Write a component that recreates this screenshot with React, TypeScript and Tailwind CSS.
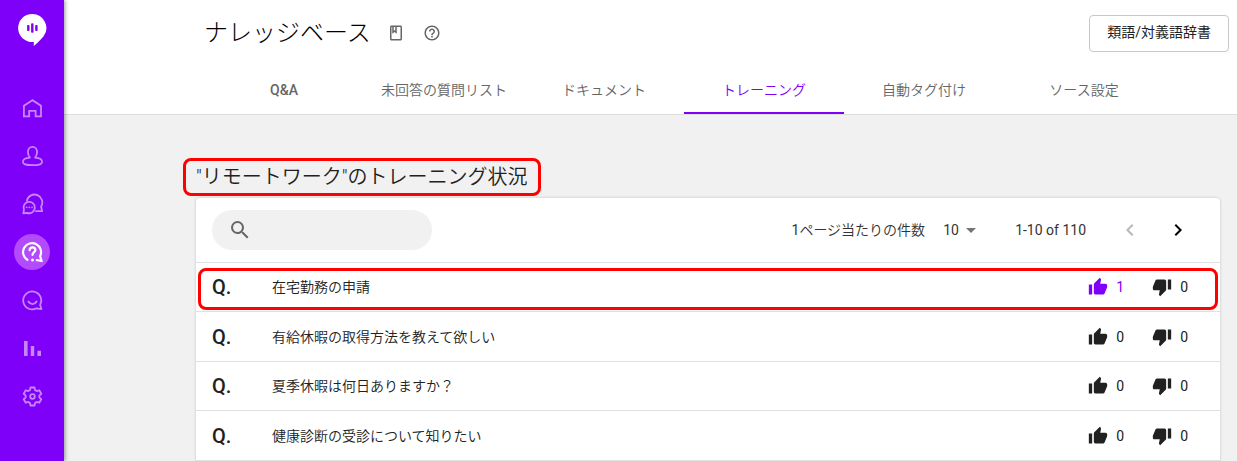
import { useState, type ReactNode } from "react";
import {
  MdArrowDropDown,
  MdChevronLeft,
  MdChevronRight,
  MdHelpOutline,
  MdOutlineClass,
  MdSearch,
  MdThumbDown,
  MdThumbUp,
} from "react-icons/md";

type Question = {
  text: string;
  good: number;
  bad: number;
  highlighted?: boolean;
};

const tabs = [
  "Q&A",
  "未回答の質問リスト",
  "ドキュメント",
  "トレーニング",
  "自動タグ付け",
  "ソース設定",
];

const questions: Question[] = [
  { text: "在宅勤務の申請", good: 1, bad: 0, highlighted: true },
  { text: "有給休暇の取得方法を教えて欲しい", good: 0, bad: 0 },
  { text: "夏季休暇は何日ありますか？", good: 0, bad: 0 },
  { text: "健康診断の受診について知りたい", good: 0, bad: 0 },
];

function NavIcon({ children, bold = false }: { children: ReactNode; bold?: boolean }) {
  return (
    <svg
      viewBox="0 0 24 24"
      className="size-6"
      fill="none"
      stroke="currentColor"
      strokeWidth={bold ? 2.2 : 1.8}
      strokeLinecap="round"
      strokeLinejoin="round"
      aria-hidden="true"
    >
      {children}
    </svg>
  );
}

const navItems: { label: string; active?: boolean; icon: ReactNode }[] = [
  {
    label: "ホーム",
    icon: (
      <NavIcon>
        <path
          d="M12.4 4.200 3.900 9.800v10.600h5.300v-5.600h6.400v5.600H21V9.800z"
          strokeLinejoin="miter"
        />
      </NavIcon>
    ),
  },
  {
    label: "ユーザー",
    icon: (
      <NavIcon>
        <path d="M9.900 13.600C8.600 12.200 7.900 10.100 7.900 8.100c0-3 1.900-5.200 4.600-5.200s4.600 2.200 4.600 5.200c0 2-.7 4.100-2 5.500 3.900.3 7 2 7 4.300 0 2.200-3.900 3.300-9.600 3.300s-9.600-1.100-9.600-3.300c0-2.300 3.100-4 7-4.300z" />
      </NavIcon>
    ),
  },
  {
    label: "チャット",
    icon: (
      <NavIcon>
        <path d="M6.900 8.600a7.800 7.800 0 1 1 14.200 5.900l1 4.700H16" />
        <path d="M4 17.900A5.700 5.700 0 1 1 7 20.800l-3.700.5z" />
        <path d="M6.600 15.300h.01M9.300 15.300h.01M12 15.300h.01" />
      </NavIcon>
    ),
  },
  {
    label: "ナレッジベース",
    active: true,
    icon: (
      <NavIcon bold>
        <path d="M7.300 19.800a9 9 0 1 1 12.800-3.600L21.700 21l-4.900-.8" />
        <path d="M9.600 10.200c.1-1.800 1.300-2.800 2.900-2.800s2.900 1 2.900 2.600c0 2.100-2.900 2.300-2.900 4.900" />
        <circle cx="12.500" cy="20" r="1.500" fill="currentColor" stroke="none" />
      </NavIcon>
    ),
  },
  {
    label: "満足度",
    icon: (
      <NavIcon>
        <path d="M20.100 16.700A9 9 0 1 0 16.500 20.300l5 .9z" />
        <path d="M8.400 13.500c1 1.700 2.400 2.600 4.100 2.600s3.100-.9 4.100-2.600" />
      </NavIcon>
    ),
  },
  {
    label: "分析",
    icon: (
      <NavIcon>
        <path
          d="M4 5h3.600v15H4zM10.800 10h3.400v10h-3.400zM17.400 14.800H21V20h-3.600z"
          fill="currentColor"
          stroke="none"
        />
      </NavIcon>
    ),
  },
  {
    label: "設定",
    icon: (
      <NavIcon>
        <path
          transform="translate(12.500 12.500)"
          d="M-2.600-6.400-2-9H2l.6 2.600 1.640.95 2.550-.78 2 3.460-1.950 1.820v1.900l1.950 1.820-2 3.460-2.550-.78L2.600 6.400 2 9h-4l-.6-2.600-1.640-.95-2.550.78-2-3.460L-6.840.95v-1.900l-1.950-1.820 2-3.460 2.550.78z"
        />
        <circle cx="12.500" cy="12.500" r="2.300" />
      </NavIcon>
    ),
  },
];

function Sidebar() {
  return (
    <aside className="z-10 flex w-16 shrink-0 flex-col items-center bg-[#7f00f9] shadow-[1px_0_4px_rgba(0,0,0,0.4)]">
      <a href="#top" aria-label="トップ" className="flex h-21 pt-3">
        <svg viewBox="0 0 32 36" className="h-9 w-8" aria-hidden="true">
          <path
            d="M16.300 2a14 14 0 0 1 11.300 22.300c-2.800 3.500-6.200 6.700-9.800 9.800v-4.200A14 14 0 1 1 16.300 2z"
            fill="#fff"
          />
          <g fill="#7f00f9">
            <rect x="11.100" y="13" width="2.400" height="6" rx=".8" />
            <rect x="15.100" y="11.200" width="2.400" height="9.600" rx=".8" />
            <rect x="19.200" y="13" width="2.400" height="6" rx=".8" />
          </g>
        </svg>
      </a>
      <nav className="flex flex-col">
        {navItems.map((item) => (
          <a
            key={item.label}
            href="#nav"
            aria-label={item.label}
            className="flex h-12 items-center justify-center"
          >
            <span
              className={
                item.active
                  ? "flex size-9 items-center justify-center rounded-full bg-[#b34bfc] text-white"
                  : "flex size-9 items-center justify-center text-[#c586fc]"
              }
            >
              {item.icon}
            </span>
          </a>
        ))}
      </nav>
    </aside>
  );
}

function Header() {
  const [activeTab, setActiveTab] = useState("トレーニング");

  return (
    <header className="border-b border-[#dedede] bg-white">
      <div className="flex h-[66px] items-center pr-2 pl-35">
        <h1 className="text-2xl font-light text-black">ナレッジベース</h1>
        <button type="button" aria-label="マニュアル" className="ml-4 text-[#666]">
          <MdOutlineClass size={18} />
        </button>
        <button type="button" aria-label="ヘルプ" className="ml-[18px] text-[#666]">
          <MdHelpOutline size={18} />
        </button>
        <button
          type="button"
          className="ml-auto h-[37px] rounded border border-[#c8c8c8] px-[17px] pb-0.5 text-sm text-[#212121]"
        >
          類語/対義語辞書
        </button>
      </div>
      <div role="tablist" className="flex pl-35">
        {tabs.map((tab) => (
          <button
            key={tab}
            type="button"
            role="tab"
            aria-selected={tab === activeTab}
            onClick={() => setActiveTab(tab)}
            className={
              tab === activeTab
                ? "h-12 w-40 border-b-2 border-[#7f00f9] pt-0.5 text-sm text-[#7f00f9]"
                : "h-12 w-40 border-b-2 border-transparent pt-0.5 text-sm text-[#666]"
            }
          >
            <span className={tab === "Q&A" ? "font-medium" : "font-[350]"}>{tab}</span>
          </button>
        ))}
      </div>
    </header>
  );
}

function Toolbar() {
  return (
    <div className="flex h-16 items-center pr-[30px] pl-4 text-sm text-[#333]">
      <label className="flex h-10 w-[220px] items-center rounded-full bg-[#f1f1f1] pr-4 pl-4">
        <MdSearch size={24} className="shrink-0 text-[#666]" />
        <input
          type="search"
          aria-label="検索"
          className="ml-2 w-full min-w-0 bg-transparent outline-none"
        />
      </label>
      <label htmlFor="per-page" className="ml-auto">
        1<span className="font-[350]">ページ当たりの件数</span>
      </label>
      <div className="relative ml-[18px] flex items-center">
        <select
          id="per-page"
          defaultValue="10"
          className="appearance-none bg-transparent pr-6 outline-none"
        >
          <option>10</option>
        </select>
        <MdArrowDropDown
          size={24}
          className="pointer-events-none absolute right-0 text-[#757575]"
        />
      </div>
      <span className="ml-8">1-10 of 110</span>
      <button type="button" disabled aria-label="前のページ" className="ml-8 text-[#b8b8b8]">
        <MdChevronLeft size={24} />
      </button>
      <button type="button" aria-label="次のページ" className="ml-6 text-black">
        <MdChevronRight size={24} />
      </button>
    </div>
  );
}

function QuestionRow({ question }: { question: Question }) {
  return (
    <tr className="relative h-[49px] border-t border-[#e0e0e0] even:h-[50px]">
      <td className="w-[76px] pl-4 text-xl font-medium">
        Q.
        {question.highlighted && (
          <span className="pointer-events-none absolute inset-x-0.5 top-1 bottom-0.5 rounded-lg border-3 border-[#ff0000]" />
        )}
      </td>
      <td className="text-sm font-[350]">{question.text}</td>
      <td className="pr-8">
        <div className="flex items-center justify-end text-sm">
          <button
            type="button"
            aria-label="良い"
            className={
              question.good > 0
                ? "flex items-center gap-2 text-[#7f00f9]"
                : "flex items-center gap-2"
            }
          >
            <MdThumbUp size={20} />
            {question.good}
          </button>
          <button type="button" aria-label="悪い" className="ml-7 flex items-center gap-2">
            <MdThumbDown size={20} />
            {question.bad}
          </button>
        </div>
      </td>
    </tr>
  );
}

export default function App() {
  return (
    <div className="flex min-h-screen bg-[#f1f1f1] font-['Roboto','Noto_Sans_CJK_JP',sans-serif] text-[#212121]">
      <Sidebar />
      <div className="min-w-0 flex-1">
        <Header />
        <main className="flex flex-col items-start pt-[43px] pr-[17px] pl-33">
          <h2 className="-ml-[13px] flex h-[38px] items-center rounded-lg border-3 border-[#ff0000] px-[10px] text-xl font-[350]">
            "リモートワーク"のトレーニング状況
          </h2>
          <section className="mt-0.5 w-full rounded-t bg-white shadow-[0_0_3px_rgba(0,0,0,0.2)]">
            <Toolbar />
            <table className="w-full border-collapse border-b border-[#e0e0e0]">
              <tbody>
                {questions.map((question) => (
                  <QuestionRow key={question.text} question={question} />
                ))}
              </tbody>
            </table>
          </section>
        </main>
      </div>
    </div>
  );
}
